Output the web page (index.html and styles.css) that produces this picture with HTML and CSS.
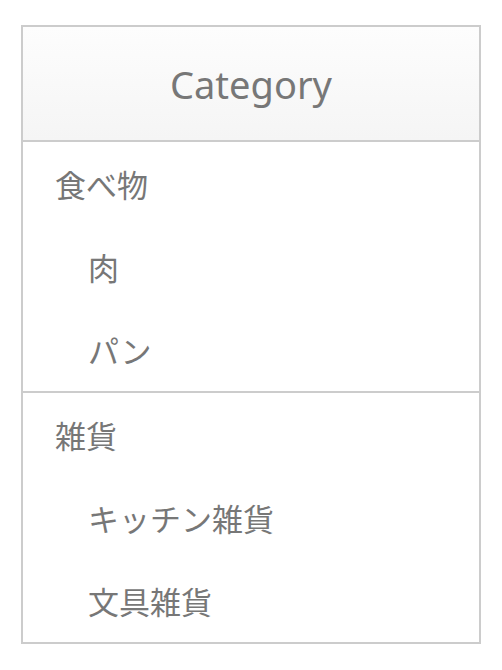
FILE: index.html
```html
<!DOCTYPE html>
<html lang="ja">
<head>
  <meta charset="UTF-8" />
  <meta name="viewport" content="width=device-width, initial-scale=1.0"/>
  <title>Category</title>
  <link rel="stylesheet" href="styles.css">
</head>
<body>

  <div class="category">
    <div class="category-title">Category</div>

    <ul class="group">
      <li class="parent">食べ物</li>
      <li class="child">肉</li>
      <li class="child">パン</li>
    </ul>

    <ul class="group">
      <li class="parent">雑貨</li>
      <li class="child">キッチン雑貨</li>
      <li class="child">文具雑貨</li>
    </ul>
  </div>

</body>
</html>
```

FILE: styles.css
```css
body { margin: 0; padding: 25px 21px; font-family: "Noto Sans CJK JP", "Noto Sans", sans-serif; color: #777; background: #fff; }
.category { width: 456px; border: 2px solid #ccc; }
.category-title { height: 113px; display: flex; align-items: center; justify-content: center; font-family: "Noto Sans", sans-serif; font-size: 38px; background: linear-gradient(#fdfdfd, #f5f5f5); border-bottom: 2px solid #ccc; }
.group { list-style: none; margin: 0; padding: 0; }
.group + .group { border-top: 2px solid #ccc; }
.group li { height: 83px; display: flex; align-items: center; font-size: 31px; }
.parent { padding-left: 32px; }
.child { padding-left: 65px; }
```
